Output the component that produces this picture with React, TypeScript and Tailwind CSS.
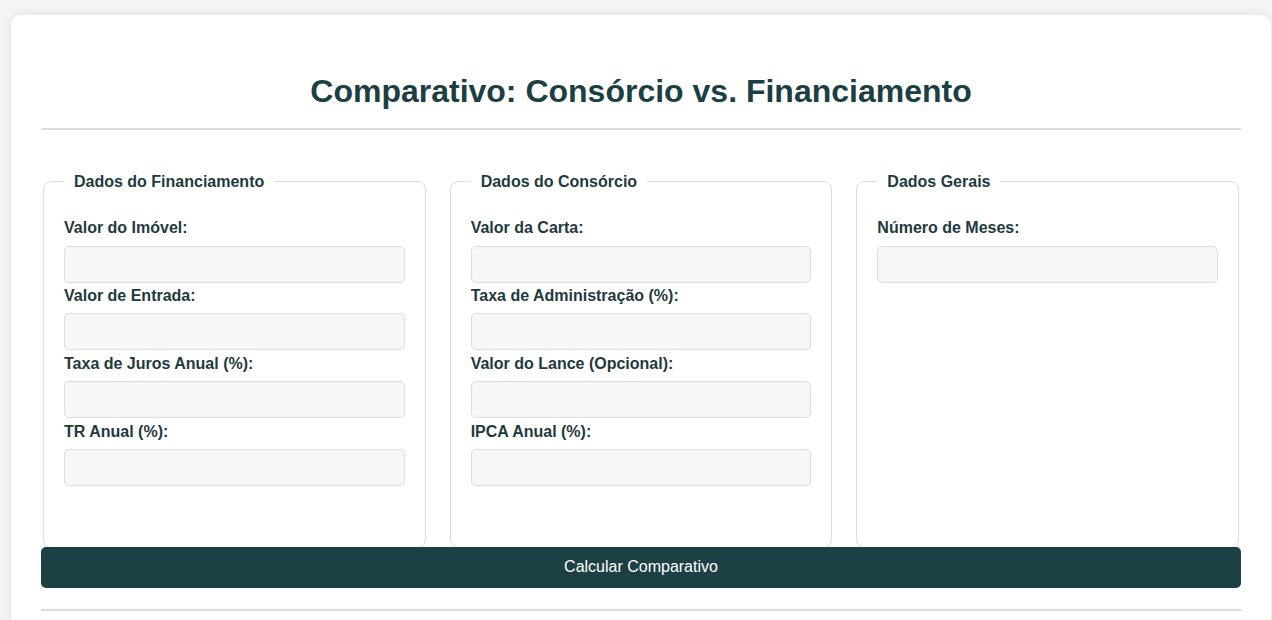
import React from "react";

const font = { fontFamily: '"Liberation Sans", Arial, sans-serif' };

function Field({ label }: { label: string }) {
  return (
    <div>
      <label className="block font-bold text-[16px] leading-[1.15] text-[#1f3a3e] mb-[8px]">{label}</label>
      <input
        type="text"
        className="block w-full h-[37px] mb-[4.5px] rounded-[5px] border border-[#dddddd] bg-[#f7f7f7] outline-none"
      />
    </div>
  );
}

function Group({ title, fields }: { title: string; fields: string[] }) {
  return (
    <fieldset className="mx-[2px] h-[375px] border border-[#dddddd] rounded-[8px] px-5 pt-[28px] pb-5 min-w-0">
      <legend className="px-[10px] font-bold text-[16px] leading-[1.15] text-[#1c3c41]">{title}</legend>
      {fields.map((f) => (
        <Field key={f} label={f} />
      ))}
    </fieldset>
  );
}

export default function App() {
  return (
    <div className="min-h-[620px] bg-[#f4f4f4] pt-[15px] overflow-hidden" style={font}>
      <div className="ml-[11px] w-[1260px] bg-white rounded-[10px] shadow-[0_0_12px_rgba(0,0,0,0.08)] px-[30px] pt-[58px] pb-[30px]">
        <h1 className="text-center font-bold text-[32px] leading-[1.15] text-[#1c3f44]">
          Comparativo: Consórcio vs. Financiamento
        </h1>
        <div className="mt-[18px] h-[2px] bg-[#dddddd]" />
        <div className="mt-[43px] grid grid-cols-3 gap-5">
          <Group
            title="Dados do Financiamento"
            fields={["Valor do Imóvel:", "Valor de Entrada:", "Taxa de Juros Anual (%):", "TR Anual (%):"]}
          />
          <Group
            title="Dados do Consórcio"
            fields={["Valor da Carta:", "Taxa de Administração (%):", "Valor do Lance (Opcional):", "IPCA Anual (%):"]}
          />
          <Group title="Dados Gerais" fields={["Número de Meses:"]} />
        </div>
        <button className="relative block w-full -mt-[1px] h-[41px] rounded-[5px] bg-[#1c4044] text-white text-[16px]">
          Calcular Comparativo
        </button>
        <div className="mt-[21px] h-[2px] bg-[#dddddd]" />
      </div>
    </div>
  );
}
